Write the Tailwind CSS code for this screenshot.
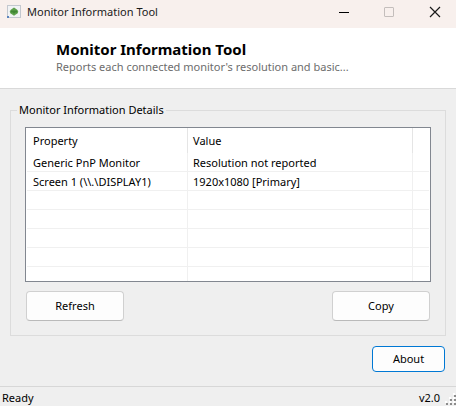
<!DOCTYPE html>
<html lang="en">
  <head>
    <meta charset="UTF-8" />
    <meta name="viewport" content="width=device-width, initial-scale=1.0" />

    <title>Monitor Information Tool</title>

    <script src="https://cdn.jsdelivr.net/npm/@tailwindcss/browser@4"></script>
  </head>

  <body
    class="flex min-h-screen flex-col bg-[#efefef] font-['Noto_Sans','Open_Sans',sans-serif] text-[11px] leading-4 text-black"
  >
    <!-- Title bar -->
    <div class="flex h-7 items-center bg-[#f8f0ed] pb-1 pl-[7px] text-[#1a1a1a]">
      <svg class="mr-[6px] h-[14px] w-[14px]" viewBox="0 0 14 14" fill="none">
        <rect x="0.5" y="0.5" width="13" height="12" fill="#f1f3f5" stroke="#c3c8cf" />
        <path
          d="M7 2.5l1.8 1.3 1.7 1.2.8 1.7-.8 1.8-1.7.9L7 10.8 5.2 9.4l-1.7-.9-.8-1.8L3.500 5l1.700-1.200z"
          fill="#5da14c"
        />
        <path d="M4 5.500h6v2H8L7 9 6 7.500H4z" fill="#3f8633" />
        <rect x="0" y="11" width="2" height="2" fill="#5b84bd" />
      </svg>
      <span class="grow">Monitor Information Tool</span>
      <div class="flex h-full">
        <button class="flex w-10 items-center justify-center" aria-label="Minimize">
          <svg class="h-3 w-3" viewBox="0 0 12 12" fill="none" stroke="#000">
            <path d="M1 6.5h10" />
          </svg>
        </button>
        <button class="flex w-[50px] items-center justify-center" aria-label="Maximize" disabled>
          <svg class="h-3 w-3" viewBox="0 0 12 12" fill="none" stroke="#c4bebc">
            <rect x="1.5" y="1.5" width="9" height="9" rx="0.5" />
          </svg>
        </button>
        <button class="flex w-[42px] items-center justify-center" aria-label="Close">
          <svg class="h-3 w-3" viewBox="0 0 12 12" fill="none" stroke="#1a1a1a" stroke-width="1.2">
            <path d="M1 1l10 10M11 1L1 11" />
          </svg>
        </button>
      </div>
    </div>

    <header class="border-b border-[#d9d9d9] bg-white pt-[11px] pb-[13px] pl-14">
      <h1 class="text-[15px] leading-5 font-bold">Monitor Information Tool</h1>
      <p class="text-[#6d6d6d]">
        Reports each connected monitor's resolution and basic...
      </p>
    </header>

    <main class="grow px-[10px] pt-[11px] pb-[14px]">
      <fieldset class="border border-[#dcdcdc] px-[14px] pt-[7px] pb-[14px]">
        <legend class="-ml-2 px-[2px] leading-5">Monitor Information Details</legend>

        <div class="border border-[#828790] bg-white px-px">
          <table class="w-full table-fixed border-separate border-spacing-0 text-left">
            <colgroup>
              <col class="w-[161px]" />
              <col />
              <col class="w-4" />
            </colgroup>
            <thead>
              <tr class="h-[25px]">
                <th class="border-r border-[#e5e5e5] pt-px pl-[6px] font-normal">Property</th>
                <th class="border-r border-[#e5e5e5] pt-px pl-[5px] font-normal">Value</th>
                <td></td>
              </tr>
            </thead>
            <tbody>
              <tr class="h-[19px]">
                <td class="border-r border-b border-[#f0f0f0] pt-[2px] pl-[6px]">Generic PnP Monitor</td>
                <td class="border-r border-b border-[#f0f0f0] pt-[2px] pl-[5px]">Resolution not reported</td>
                <td class="border-b border-[#f0f0f0]"></td>
              </tr>
              <tr class="h-[19px]">
                <td class="border-r border-b border-[#f0f0f0] pt-[2px] pl-[6px]">Screen 1 (\\.\DISPLAY1)</td>
                <td class="border-r border-b border-[#f0f0f0] pt-[2px] pl-[5px]">1920x1080 [Primary]</td>
                <td class="border-b border-[#f0f0f0]"></td>
              </tr>
              <tr class="h-[19px]">
                <td class="border-r border-b border-[#f0f0f0]"></td>
                <td class="border-r border-b border-[#f0f0f0]"></td>
                <td class="border-b border-[#f0f0f0]"></td>
              </tr>
              <tr class="h-[19px]">
                <td class="border-r border-b border-[#f0f0f0]"></td>
                <td class="border-r border-b border-[#f0f0f0]"></td>
                <td class="border-b border-[#f0f0f0]"></td>
              </tr>
              <tr class="h-[19px]">
                <td class="border-r border-b border-[#f0f0f0]"></td>
                <td class="border-r border-b border-[#f0f0f0]"></td>
                <td class="border-b border-[#f0f0f0]"></td>
              </tr>
              <tr class="h-[19px]">
                <td class="border-r border-b border-[#f0f0f0]"></td>
                <td class="border-r border-b border-[#f0f0f0]"></td>
                <td class="border-b border-[#f0f0f0]"></td>
              </tr>
              <tr class="h-[14px]">
                <td class="border-r border-[#f0f0f0]"></td>
                <td class="border-r border-[#f0f0f0]"></td>
                <td></td>
              </tr>
            </tbody>
          </table>
        </div>

        <div class="mt-[9px] flex justify-between px-px">
          <button
            class="h-[30px] w-[98px] rounded border border-[#d0d0d0] border-b-[#bababa] bg-[#fdfdfd]"
          >
            Refresh
          </button>
          <button
            class="h-[30px] w-[98px] rounded border border-[#d0d0d0] border-b-[#bababa] bg-[#fdfdfd]"
          >
            Copy
          </button>
        </div>
      </fieldset>

      <div class="mt-[10px] flex justify-end pr-px">
        <button class="h-[26px] w-[73px] rounded border border-[#0078d4] bg-[#fdfdfd]">
          About
        </button>
      </div>
    </main>

    <footer class="flex h-5 justify-between border-t border-[#d7d7d7] pt-[3px] pl-[2px]">
      <span>Ready</span>
      <div class="flex items-end">
        <span>v2.0</span>
        <svg class="h-4 w-4" viewBox="0 0 16 16">
          <g fill="#fff">
            <path
              d="M13 3h2v2h-2zM9 7h2v2H9zM13 7h2v2h-2zM5 11h2v2H5zM9 11h2v2H9zM13 11h2v2h-2z"
            />
          </g>
          <g fill="#8c8c8c">
            <path
              d="M14 5h2v2h-2zM10 9h2v2h-2zM14 9h2v2h-2zM6 13h2v2H6zM10 13h2v2h-2zM14 13h2v2h-2z"
            />
          </g>
        </svg>
      </div>
    </footer>
  </body>
</html>
